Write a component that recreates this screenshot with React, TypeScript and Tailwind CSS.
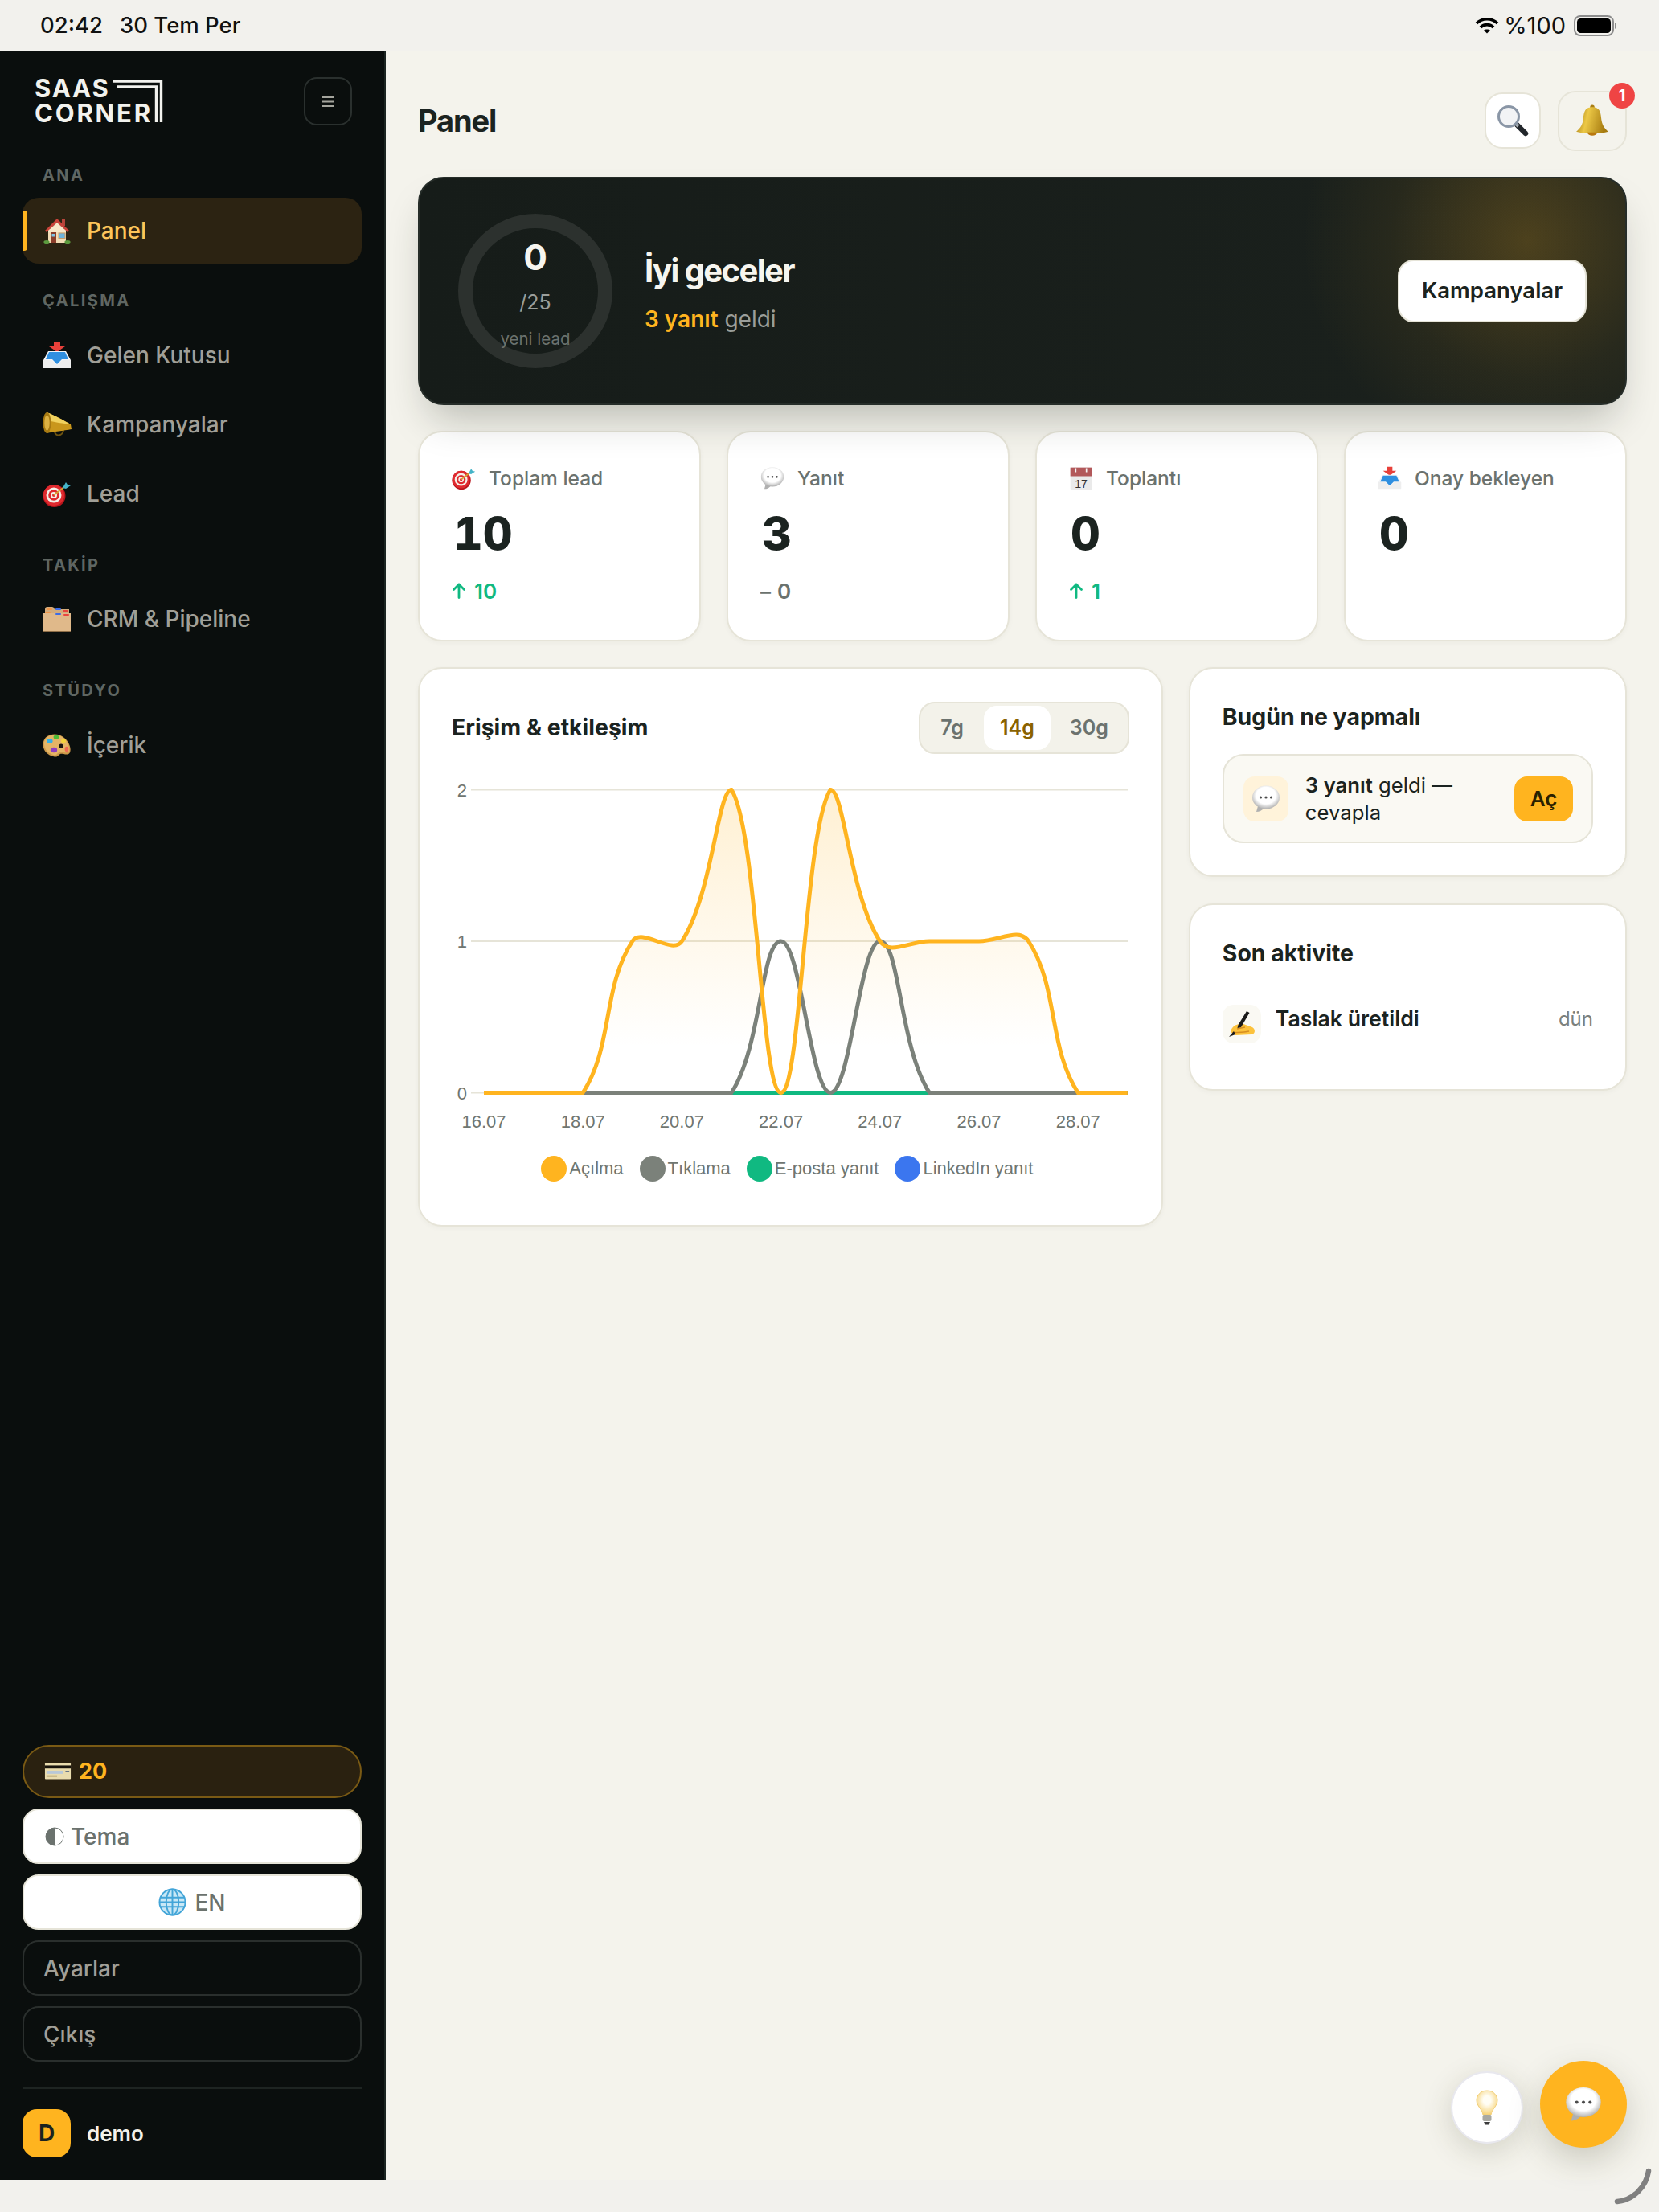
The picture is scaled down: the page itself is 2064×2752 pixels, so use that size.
import type { ReactNode } from "react";

// --- emoji drawings ---

function HouseIcon({ size = 36 }: { size?: number }) {
  return (
    <svg width={size} height={size} viewBox="0 0 36 36">
      <rect x="24" y="3" width="4" height="9" fill="#b5443a" />
      <rect x="7" y="16" width="22" height="17" fill="#f3dcb6" />
      <path d="M18 3 L33 18 L31 20 L18 8 L5 20 L3 18 Z" fill="#c8433a" />
      <path d="M18 8 L29 18 L29 20 L7 20 L7 18 Z" fill="#f8e7c9" />
      <rect x="10" y="20" width="7" height="13" fill="#8a3d2b" />
      <rect x="11.5" y="22" width="4" height="3.5" fill="#7ec3e6" />
      <rect x="20" y="21" width="8" height="6.5" fill="#6fb3dc" stroke="#c69a68" strokeWidth="1" />
      <ellipse cx="5" cy="32" rx="3.6" ry="2" fill="#5c9a3e" />
      <ellipse cx="31" cy="32" rx="3.6" ry="2" fill="#5c9a3e" />
    </svg>
  );
}

function InboxIcon({ size = 36 }: { size?: number }) {
  return (
    <svg width={size} height={size} viewBox="0 0 36 36">
      <path d="M14 1 H22 V7 H28 L18 14 L8 7 H14 Z" fill="#e8403a" />
      <path d="M7 13 H29 L35 24 V33 H1 V24 Z" fill="#f2f3f5" />
      <path d="M8 14 H28 L32 23 H24 L18 29 L12 23 H4 Z" fill="#2f8fe0" />
      <path d="M1 24 H11 L18 30 L25 24 H35 V34 H1 Z" fill="#eeeeee" />
    </svg>
  );
}

function MegaphoneIcon({ size = 36 }: { size?: number }) {
  return (
    <svg width={size} height={size} viewBox="0 0 36 36">
      <path d="M15 26 C15 34 25 33 26 25" fill="none" stroke="#6e5310" strokeWidth="2" />
      <path d="M5 3 C14 6 26 13 35 18 L36 24 C26 26 14 27 5 29 Z" fill="#c9971c" />
      <path d="M5 3 C14 6 26 13 35 18 C26 17 14 15 6 13 Z" fill="#f1d25f" />
      <ellipse cx="5.5" cy="16" rx="5" ry="13" fill="#a87a12" />
      <ellipse cx="5.5" cy="16" rx="3.2" ry="9.5" fill="#dcb142" />
    </svg>
  );
}

function TargetIcon({ size = 36 }: { size?: number }) {
  return (
    <svg width={size} height={size} viewBox="0 0 36 36">
      <circle cx="14.5" cy="21" r="14" fill="#b8151c" />
      <circle cx="14" cy="20" r="13" fill="#e02a2f" />
      <circle cx="14" cy="20" r="9.5" fill="#f5efe8" />
      <circle cx="14" cy="20" r="6.8" fill="#e02a2f" />
      <circle cx="14" cy="20" r="4" fill="#f5efe8" />
      <circle cx="14" cy="20" r="2" fill="#e02a2f" />
      <path d="M14 20 L28 9" stroke="#d5a033" strokeWidth="2" />
      <path d="M25 11 L29 4 L31 7 L35 8 L29 12 Z" fill="#45b4c8" />
    </svg>
  );
}

function BoxIcon({ size = 36 }: { size?: number }) {
  return (
    <svg width={size} height={size} viewBox="0 0 36 36">
      <path d="M3 6 Q3 3 6 3 H12 Q14 3 15 6 H33 V12 H3 Z" fill="#d4ac7c" />
      <rect x="5" y="5" width="7" height="2" rx="1" fill="#f0964a" />
      <rect x="16" y="5" width="7" height="2" rx="1" fill="#3d6ce6" />
      <rect x="25" y="7" width="7" height="2" rx="1" fill="#e8463f" />
      <path d="M1 11 H35 V34 H1 Z" fill="#e0b98a" />
      <rect x="3" y="9" width="7" height="2" rx="1" fill="#f0964a" />
      <rect x="16" y="11" width="7" height="2" rx="1" fill="#3d6ce6" />
      <rect x="26" y="12" width="7" height="2" rx="1" fill="#e8463f" />
      <path d="M1 33.5 H35" stroke="#8f6e48" strokeWidth="1" />
    </svg>
  );
}

function PaletteIcon({ size = 36 }: { size?: number }) {
  return (
    <svg width={size} height={size} viewBox="0 0 36 36">
      <path d="M1 14 C3 4 18 1 27 9 C33 14 36 22 34 27 C32 32 25 28 22 29 C19 30 20 34 13 32 C6 30 -1 24 1 14 Z" fill="#cf9a4a" />
      <path d="M2 14 C4 5 18 2 26 9 C32 14 34 22 33 25 C31 29 25 26 21 27 C17 28 18 32 13 30 C7 28 1 23 2 14 Z" fill="#e5b566" />
      <ellipse cx="9" cy="13" rx="3.6" ry="3" fill="#35b0e6" />
      <ellipse cx="17" cy="8" rx="3.4" ry="2.6" fill="#4cbc36" />
      <ellipse cx="26" cy="13" rx="3" ry="2.2" fill="#f4d43c" />
      <ellipse cx="14" cy="24" rx="4.2" ry="3.2" fill="#8f3ec0" />
      <ellipse cx="30" cy="23" rx="2.4" ry="3.2" fill="#ef6a55" />
      <circle cx="23" cy="19" r="2.6" fill="#1a1510" />
    </svg>
  );
}

function CardIcon({ size = 36 }: { size?: number }) {
  return (
    <svg width={size} height={size} viewBox="0 0 36 36">
      <rect x="1" y="7" width="34" height="21" rx="1" fill="#e9dcae" />
      <rect x="1" y="10" width="34" height="4" fill="#17130c" />
      <rect x="3" y="17" width="22" height="4" fill="#b8c8d8" />
      <rect x="28" y="17" width="5" height="2" fill="#5d6d86" />
      <rect x="3" y="23" width="14" height="2" fill="#b5a573" />
    </svg>
  );
}

function GlobeIcon({ size = 36 }: { size?: number }) {
  return (
    <svg width={size} height={size} viewBox="0 0 36 36" fill="none">
      <circle cx="18" cy="18" r="17" fill="#c9e8f6" />
      <g stroke="#43a5d8" strokeWidth="2">
        <circle cx="18" cy="18" r="16.5" />
        <ellipse cx="18" cy="18" rx="8" ry="16.5" />
        <path d="M18 1.5 V34.5 M2 12 H34 M1.5 18 H34.5 M2 24 H34" />
      </g>
    </svg>
  );
}

function SearchEmoji() {
  return (
    <svg width="40" height="40" viewBox="0 0 40 40" fill="none">
      <path d="M25 25 L36 36" stroke="#22262b" strokeWidth="6.5" strokeLinecap="round" />
      <path d="M23 23 L27 27" stroke="#a9b0b6" strokeWidth="4" />
      <circle cx="15" cy="15" r="12.5" fill="#f2f3f5" stroke="#8a96a6" strokeWidth="3" />
    </svg>
  );
}

function BellEmoji() {
  return (
    <svg width="42" height="42" viewBox="0 0 40 40">
      <defs>
        <linearGradient id="bellGold" x1="0" x2="1" y1="0" y2="0.2">
          <stop offset="0" stopColor="#9a700e" />
          <stop offset="0.4" stopColor="#ecc846" />
          <stop offset="1" stopColor="#a67b10" />
        </linearGradient>
      </defs>
      <circle cx="20" cy="4" r="2.6" fill="#a97d12" />
      <path d="M20 4 C10 4 10 12 9 20 C8 26 5 30 1 33 C10 36 30 36 39 33 C35 30 32 26 31 20 C30 12 30 4 20 4 Z" fill="url(#bellGold)" />
      <path d="M14 34 C15 39 25 39 26 34 Z" fill="#b9780f" />
    </svg>
  );
}

function BubbleIcon({ size = 36 }: { size?: number }) {
  return (
    <svg width={size} height={size} viewBox="0 0 36 36">
      <defs>
        <radialGradient id="bubbleFill" cx="0.5" cy="0.42" r="0.6">
          <stop offset="0.6" stopColor="#ffffff" />
          <stop offset="1" stopColor="#a8a8a8" />
        </radialGradient>
      </defs>
      <path d="M8 27 L6 34 Q12 34 16 29 Z" fill="#b0b0b0" />
      <ellipse cx="18" cy="16" rx="17" ry="14.5" fill="url(#bubbleFill)" />
      <circle cx="11.5" cy="16" r="1.6" fill="#4b4b4b" />
      <circle cx="18" cy="16" r="1.6" fill="#4b4b4b" />
      <circle cx="24.5" cy="16" r="1.6" fill="#4b4b4b" />
    </svg>
  );
}

function CalendarIcon({ size = 30 }: { size?: number }) {
  return (
    <svg width={size} height={size} viewBox="0 0 36 36">
      <rect x="2" y="2" width="32" height="33" rx="1.5" fill="#eaeaea" />
      <rect x="2" y="2" width="32" height="13" fill="#b2585a" />
      <rect x="9" y="3" width="2" height="6" fill="#f4f4f4" />
      <rect x="25" y="3" width="2" height="6" fill="#f4f4f4" />
      <text x="18" y="32" textAnchor="middle" fontSize="17" fill="#333" fontFamily="Liberation Sans, sans-serif">17</text>
    </svg>
  );
}

function BulbIcon() {
  return (
    <svg width="28" height="44" viewBox="0 0 28 44">
      <defs>
        <radialGradient id="bulbFill" cx="0.5" cy="0.4" r="0.6">
          <stop offset="0.3" stopColor="#fffdf4" />
          <stop offset="1" stopColor="#f6d276" />
        </radialGradient>
      </defs>
      <path d="M14 1 C5 1 1 8 1 13 C1 20 8 24 9 31 H19 C20 24 27 20 27 13 C27 8 23 1 14 1 Z" fill="url(#bulbFill)" stroke="#f2cf79" strokeWidth="1" />
      <rect x="8.5" y="31" width="11" height="8" rx="2" fill="#a8a8a2" />
      <path d="M10 40 H18 L16 43.5 H12 Z" fill="#3b3b3b" />
    </svg>
  );
}

function WriteIcon() {
  return (
    <svg width="36" height="36" viewBox="0 0 36 36">
      <path d="M4 28 C5 21 12 17 20 18 L31 22 C36 25 34 31 30 31 L10 32 Z" fill="#fcc23c" />
      <path d="M6 29 C10 28 18 29 27 27 M12 24 L22 22" fill="none" stroke="#d78e1f" strokeWidth="1.4" />
      <path d="M24 2 L27.5 4 L17 22 L12.5 23 L13.5 19 Z" fill="#1a1a1a" />
      <path d="M2 34 L8 27 L10 31 Z" fill="#1a1a1a" />
    </svg>
  );
}

function ArrowUp() {
  return (
    <svg width="18" height="20" viewBox="0 0 18 20" fill="none" stroke="#10b981" strokeWidth="2.8" strokeLinecap="round" strokeLinejoin="round">
      <path d="M9 18.5 V2 M2.5 8.5 L9 2 L15.5 8.5" />
    </svg>
  );
}

// --- chart ---

const chartLeft = 602;
const chartStep = 61.6;
const yTop = 982.5;
const yBase = 1359.5;

function linePath(values: number[]) {
  const pts = values.map((v, i) => ({
    x: chartLeft + i * chartStep,
    y: yBase - (v / 2) * (yBase - yTop),
  }));
  const clamp = (n: number) => Math.min(yBase, Math.max(yTop, n));
  // same spline as chart.js with tension 0.4
  const ctrl = pts.map((p, i) => {
    const a = pts[Math.max(i - 1, 0)];
    const b = pts[Math.min(i + 1, pts.length - 1)];
    const d1 = Math.hypot(p.x - a.x, p.y - a.y);
    const d2 = Math.hypot(b.x - p.x, b.y - p.y);
    const s1 = d1 / (d1 + d2) || 0;
    const s2 = d2 / (d1 + d2) || 0;
    return {
      px: p.x - 0.4 * s1 * (b.x - a.x),
      py: clamp(p.y - 0.4 * s1 * (b.y - a.y)),
      nx: p.x + 0.4 * s2 * (b.x - a.x),
      ny: clamp(p.y + 0.4 * s2 * (b.y - a.y)),
    };
  });
  let d = `M${pts[0].x} ${pts[0].y}`;
  for (let i = 1; i < pts.length; i++) {
    d += ` C${ctrl[i - 1].nx} ${ctrl[i - 1].ny} ${ctrl[i].px} ${ctrl[i].py} ${pts[i].x} ${pts[i].y}`;
  }
  return d;
}

const opens = [0, 0, 0, 1, 1, 2, 0, 2, 1, 1, 1, 1, 0, 0];
const clicks = [0, 0, 0, 0, 0, 0, 1, 0, 1, 0, 0, 0, 0, 0];
const flat = [0, 0, 0, 0, 0, 0, 0, 0, 0, 0, 0, 0, 0, 0];
const dates = ["16.07", "18.07", "20.07", "22.07", "24.07", "26.07", "28.07"];

function EngagementChart() {
  const tickFont = "Liberation Sans, Arial, sans-serif";
  return (
    <svg className="mt-[31px] block" width="842" height="450" viewBox="562 970 842 450" fill="none">
      <defs>
        <linearGradient id="openFill" gradientUnits="userSpaceOnUse" x1="0" x2="0" y1={yTop} y2={yBase}>
          <stop offset="0" stopColor="#ffb41f" stopOpacity="0.2" />
          <stop offset="0.85" stopColor="#ffb41f" stopOpacity="0" />
        </linearGradient>
      </defs>
      {[yTop, (yTop + yBase) / 2, yBase].map((y) => (
        <path key={y} d={`M586 ${y} H1403`} stroke="#e6e4d8" strokeWidth="2" />
      ))}
      {["2", "1", "0"].map((t, i) => (
        <text key={t} x="581" y={yTop + 8 + (i * (yBase - yTop)) / 2} textAnchor="end" fontSize="22" fill="#6f7671" fontFamily={tickFont}>
          {t}
        </text>
      ))}
      <path d={`${linePath(opens)} V${yBase} H${chartLeft} Z`} fill="url(#openFill)" />
      <path d={linePath(flat)} stroke="#3b76ef" strokeWidth="5" />
      <path d={linePath(flat)} stroke="#10b981" strokeWidth="5" />
      <path d={linePath(clicks)} stroke="#7b817a" strokeWidth="5" />
      <path d={linePath(opens)} stroke="#ffb41f" strokeWidth="5" />
      {dates.map((t, i) => (
        <text key={t} x={chartLeft + i * 2 * chartStep} y="1403" textAnchor="middle" fontSize="22" fill="#6f7671" fontFamily={tickFont}>
          {t}
        </text>
      ))}
    </svg>
  );
}

const legend = [
  { label: "Açılma", color: "bg-[#ffb41f]" },
  { label: "Tıklama", color: "bg-[#7b817a]" },
  { label: "E-posta yanıt", color: "bg-[#10b981]" },
  { label: "LinkedIn yanıt", color: "bg-[#3b76ef]" },
];

// --- sidebar ---

function SectionLabel({ children }: { children: ReactNode }) {
  return (
    <div className="h-[24px] pl-[25px] text-[20px] leading-[24px] font-bold tracking-[0.12em] text-[#5f6662]">
      {children}
    </div>
  );
}

function NavRow({ icon, label, active }: { icon: ReactNode; label: string; active?: boolean }) {
  return (
    <div
      className={
        active
          ? "relative flex h-[82px] items-center gap-[19px] rounded-[20px] bg-[#2c2312] pl-[25px] text-[28px] font-medium text-[#fdc55a]"
          : "flex h-[82px] items-center gap-[19px] rounded-[20px] pl-[25px] text-[28px] font-medium text-[#a09f97]"
      }
    >
      {active && <span className="absolute top-[16px] left-0 h-[50px] w-[6px] rounded-r-[4px] bg-[#ffb41f]" />}
      {icon}
      {label}
    </div>
  );
}

function Sidebar() {
  return (
    <aside className="flex w-[480px] shrink-0 flex-col border-r-2 border-[#1b2421] bg-[#0a0e0d] px-[28px] pb-[28px]">
      <div className="mt-[32px] flex h-[60px] items-center justify-between pr-[12px]">
        <div className="relative ml-[15px] h-[56px] w-[160px] font-bold text-[#f2f2ee]">
          <div className="absolute top-[0px] left-0 text-[31px] leading-[24px] tracking-[1.8px]">SAAS</div>
          <div className="absolute top-[31px] left-0 text-[31px] leading-[24px] tracking-[2.8px]">CORNER</div>
          <svg className="absolute top-0 left-0" width="160" height="56" viewBox="0 0 160 56" fill="none" stroke="#f2f2ee" strokeWidth="3.4">
            <path d="M97 3 H157.5 V54" />
            <path d="M102 10 H151.5 V54" />
          </svg>
        </div>
        <button className="flex h-[60px] w-[60px] items-center justify-center rounded-[16px] border-2 border-[#2a302e]">
          <svg width="20" height="16" viewBox="0 0 20 16" stroke="#a5a59d" strokeWidth="2">
            <path d="M2 3 H18 M2 8.5 H18 M2 14 H18" />
          </svg>
        </button>
      </div>

      <div className="mt-[50px] flex flex-col gap-[16px]">
        <SectionLabel>ANA</SectionLabel>
        <NavRow active icon={<HouseIcon />} label="Panel" />
      </div>

      <div className="mt-[34px] flex flex-col gap-[15px]">
        <SectionLabel>ÇALIŞMA</SectionLabel>
        <div className="flex flex-col gap-[4px]">
          <NavRow icon={<InboxIcon />} label="Gelen Kutusu" />
          <NavRow icon={<MegaphoneIcon />} label="Kampanyalar" />
          <NavRow icon={<TargetIcon />} label="Lead" />
        </div>
      </div>

      <div className="mt-[36px] flex flex-col gap-[14px]">
        <SectionLabel>TAKİP</SectionLabel>
        <NavRow icon={<BoxIcon />} label="CRM & Pipeline" />
      </div>

      <div className="mt-[36px] flex flex-col gap-[15px]">
        <SectionLabel>STÜDYO</SectionLabel>
        <NavRow icon={<PaletteIcon />} label="İçerik" />
      </div>

      <div className="mt-auto flex flex-col gap-[13px]">
        <div className="flex h-[66px] items-center gap-[9px] rounded-full border-2 border-[#7a5a14] bg-[#2a2110] pl-[25px] text-[27px] font-bold text-[#ffb41f]">
          <CardIcon size={34} />
          20
        </div>
        <div className="flex h-[69px] items-center gap-[8px] rounded-[20px] border-2 border-[#e6e4d8] bg-white pl-[26px] text-[28px] font-medium text-[#6b726e]">
          <svg width="24" height="24" viewBox="0 0 24 24">
            <circle cx="12" cy="12" r="11" fill="#fff" stroke="#6b726e" strokeWidth="1" />
            <path d="M12 1 A11 11 0 0 0 12 23 Z" fill="#6b726e" />
          </svg>
          Tema
        </div>
        <div className="flex h-[69px] items-center justify-center gap-[10px] rounded-[20px] border-2 border-[#e6e4d8] bg-white text-[28px] font-medium text-[#6b726e]">
          <GlobeIcon size={35} />
          EN
        </div>
        <div className="flex h-[69px] items-center rounded-[20px] border-2 border-[#2a2f2d] pl-[24px] text-[28px] font-medium text-[#a09f97]">
          Ayarlar
        </div>
        <div className="flex h-[69px] items-center rounded-[20px] border-2 border-[#2a2f2d] pl-[24px] text-[28px] font-medium text-[#a09f97]">
          Çıkış
        </div>
      </div>

      <div className="mt-[32px] flex items-center gap-[20px] border-t-2 border-[#1e2422] pt-[25px]">
        <div className="flex h-[60px] w-[60px] items-center justify-center rounded-[18px] bg-[#ffb41f] text-[28px] font-bold text-[#1b2320]">
          D
        </div>
        <span className="text-[26px] font-semibold text-[#f2f1ea]">demo</span>
      </div>
    </aside>
  );
}

// --- main ---

const stats = [
  { icon: <TargetIcon size={30} />, label: "Toplam lead", value: "10", delta: "10", up: true },
  { icon: <BubbleIcon size={30} />, label: "Yanıt", value: "3", delta: "0", up: false },
  { icon: <CalendarIcon />, label: "Toplantı", value: "0", delta: "1", up: true },
  { icon: <InboxIcon size={30} />, label: "Onay bekleyen", value: "0", delta: "", up: false },
];

function StatCard({ icon, label, value, delta, up }: (typeof stats)[number]) {
  return (
    <div className="h-[262px] rounded-[30px] border-2 border-[#e6e4d8] bg-white pt-[39px] pl-[40px] shadow-[0_2px_6px_rgba(40,40,20,0.04)]">
      <div className="flex h-[36px] items-center gap-[16px] text-[24.5px] font-medium text-[#6b726e]">
        {icon}
        {label}
      </div>
      <div className="mt-[15px] h-[72px] pl-[2px] text-[57px] leading-[72px] font-extrabold text-[#1b2320] tabular-nums">{value}</div>
      {delta && (
        <div
          className={
            up
              ? "mt-[17px] flex h-[36px] items-center gap-[10px] text-[26px] font-semibold text-[#10b981]"
              : "mt-[17px] flex h-[36px] items-center gap-[8px] text-[26px] font-semibold text-[#6b726e]"
          }
        >
          {up ? <ArrowUp /> : <span>–</span>}
          {delta}
        </div>
      )}
    </div>
  );
}

export default function App() {
  return (
    <div className="relative flex h-[2752px] w-[2064px] flex-col overflow-hidden bg-[#f2f1ed] font-['Inter',sans-serif]">
      {/* status bar */}
      <div className="flex h-[64px] items-center justify-between pr-[52px] pl-[50px] text-[27.5px] font-medium text-[#111]">
        <div className="flex gap-[21px]">
          <span>02:42</span>
          <span>30 Tem Per</span>
        </div>
        <div className="flex items-center gap-[10px]">
          <svg className="mr-[-4px]" width="30" height="22" viewBox="0 0 30 22" fill="none" stroke="#000" strokeWidth="3.6">
            <path d="M2 8 C9 1 21 1 28 8" />
            <path d="M7 13 C11 8.5 19 8.5 23 13" />
            <path d="M15 20.5 L11 16.5 C13 15 17 15 19 16.5 Z" fill="#000" stroke="none" />
          </svg>
          <span className="text-[29px] font-normal">%100</span>
          <svg width="54" height="26" viewBox="0 0 54 26">
            <rect x="1" y="1" width="48" height="24" rx="7" fill="none" stroke="#8d8d8d" strokeWidth="2" />
            <rect x="4" y="4" width="42" height="18" rx="4.5" fill="#000" />
            <path d="M51 9 C53 10 53 16 51 17 Z" fill="#8d8d8d" />
          </svg>
        </div>
      </div>

      <div className="flex h-[2648px]">
        <Sidebar />

        <main className="flex-1 bg-[#f4f3ec] px-[40px]">
          <div className="mt-[48px] flex h-[76px] items-center justify-between">
            <h1 className="text-[38px] font-bold tracking-[-0.03em] text-[#1b2320]">Panel</h1>
            <div className="flex items-center gap-[21px]">
              <button className="flex h-[70px] w-[70px] items-center justify-center rounded-[22px] border-2 border-[#e6e4d8] bg-white">
                <SearchEmoji />
              </button>
              <button className="relative flex h-[75px] w-[86px] items-center justify-center rounded-[22px] border-2 border-[#e6e4d8]">
                <BellEmoji />
                <span className="absolute top-[-12px] right-[-12px] flex h-[32px] w-[32px] items-center justify-center rounded-full bg-[#ef4444] text-[20px] font-bold text-white">
                  1
                </span>
              </button>
            </div>
          </div>

          {/* hero */}
          <div className="relative z-10 mt-[32px] flex h-[284px] items-center gap-[40px] rounded-[32px] border-2 border-[#262d29] bg-[radial-gradient(circle_at_1378px_78px,rgba(255,180,31,0.22),rgba(255,180,31,0.06)_170px,rgba(255,180,31,0)_280px),linear-gradient(90deg,#161c19,#1b211d)] px-[48px] shadow-[0_28px_50px_-14px_rgba(30,35,25,0.28)]">
            <div className="flex h-[192px] w-[192px] flex-col items-center rounded-full border-[18px] border-[#2c312e] text-center">
              <div className="mt-[10px] h-[52px] text-[44px] leading-[52px] font-bold text-[#f6f5ef]">0</div>
              <div className="mt-[14px] h-[32px] text-[25px] leading-[32px] text-[#9a9e9a]">/25</div>
              <div className="mt-[16px] h-[28px] text-[20.5px] leading-[28px] whitespace-nowrap text-[#6b726e]">yeni lead</div>
            </div>
            <div className="flex-1 pt-[4px]">
              <div className="text-[40px] leading-[48px] font-bold tracking-[-0.04em] text-[#f6f5ef]">İyi geceler</div>
              <div className="mt-[18px] text-[28px] leading-[36px] text-[#9a9e9a]">
                <span className="font-semibold text-[#ffb41f]">3 yanıt</span> geldi
              </div>
            </div>
            <button className="h-[78px] w-[235px] rounded-[20px] border-2 border-[#e6e4d8] bg-white text-[27.5px] font-semibold text-[#1b2320]">
              Kampanyalar
            </button>
          </div>

          {/* stats */}
          <div className="mt-[32px] grid grid-cols-4 gap-[32px]">
            {stats.map((s) => (
              <StatCard key={s.label} {...s} />
            ))}
          </div>

          <div className="mt-[32px] grid grid-cols-[1.7fr_1fr] gap-[32px]">
            {/* chart card */}
            <div className="h-[696px] rounded-[30px] border-2 border-[#e6e4d8] bg-white px-[40px] pt-[40px] shadow-[0_2px_6px_rgba(40,40,20,0.04)]">
              <div className="flex h-[67px] items-center justify-between">
                <h2 className="text-[28.4px] font-bold text-[#1b2320]">Erişim & etkileşim</h2>
                <div className="flex items-center gap-[4px] rounded-[20px] border-2 border-[#e6e4d8] bg-[#f3f2ea] px-[4px] py-[3px] text-[25px] font-semibold text-[#6b726e]">
                  <span className="px-[21px] py-[9px]">7g</span>
                  <span className="rounded-[16px] bg-white px-[20px] py-[9px] text-[#8a6200]">14g</span>
                  <span className="px-[20px] py-[9px]">30g</span>
                </div>
              </div>
              <EngagementChart />
              <div className="mt-[17px] flex items-center justify-center gap-[20px] pr-[8px] font-['Liberation_Sans',Arial,sans-serif] text-[22px] text-[#6f7671]">
                {legend.map((l) => (
                  <div key={l.label} className="flex items-center gap-[3px]">
                    <span className={`h-[32px] w-[32px] rounded-full ${l.color}`} />
                    {l.label}
                  </div>
                ))}
              </div>
            </div>

            {/* right column */}
            <div className="flex flex-col gap-[33px]">
              <div className="h-[261px] rounded-[30px] border-2 border-[#e6e4d8] bg-white px-[40px] pt-[42px] shadow-[0_2px_6px_rgba(40,40,20,0.04)]">
                <h2 className="h-[36px] text-[28.4px] leading-[36px] font-bold text-[#1b2320]">Bugün ne yapmalı</h2>
                <div className="mt-[28px] flex h-[111px] items-center gap-[21px] rounded-[26px] border-2 border-[#e6e4d8] bg-[#faf9f3] pr-[23px] pl-[24px]">
                  <div className="flex h-[56px] w-[56px] shrink-0 items-center justify-center rounded-[14px] bg-[#fff3da]">
                    <BubbleIcon />
                  </div>
                  <div className="flex-1 text-[25.7px] leading-[34px] text-[#1b2320]">
                    <div>
                      <span className="font-semibold">3 yanıt</span> geldi —
                    </div>
                    <div>cevapla</div>
                  </div>
                  <button className="h-[56px] w-[73px] shrink-0 rounded-[16px] bg-[#ffb41f] text-[26px] font-semibold text-[#2a2000]">
                    Aç
                  </button>
                </div>
              </div>

              <div className="h-[233px] rounded-[30px] border-2 border-[#e6e4d8] bg-white px-[40px] pt-[42px] shadow-[0_2px_6px_rgba(40,40,20,0.04)]">
                <h2 className="h-[36px] text-[28.4px] leading-[36px] font-bold text-[#1b2320]">Son aktivite</h2>
                <div className="mt-[46px] flex items-start gap-[18px]">
                  <div className="flex h-[48px] w-[48px] shrink-0 items-center justify-center rounded-[14px] bg-[#faf9f3]">
                    <WriteIcon />
                  </div>
                  <div className="flex-1 text-[26.7px] leading-[34px] font-semibold text-[#1b2320]">Taslak üretildi</div>
                  <div className="text-[24px] leading-[36px] text-[#7b817d]">dün</div>
                </div>
              </div>
            </div>
          </div>
        </main>
      </div>

      {/* floating buttons */}
      <button className="absolute top-[2577px] left-[1805px] flex h-[90px] w-[90px] items-center justify-center rounded-full border-2 border-[#e8e8ee] bg-white shadow-[0_10px_36px_rgba(60,60,30,0.18)]">
        <BulbIcon />
      </button>
      <button className="absolute top-[2564px] left-[1916px] flex h-[108px] w-[108px] items-center justify-center rounded-full bg-[#ffb41f] shadow-[0_16px_40px_rgba(60,60,30,0.22)]">
        <BubbleIcon size={46} />
      </button>
      <svg className="absolute top-[2695px] left-[2006px]" width="50" height="50" viewBox="0 0 50 50" fill="none">
        <path d="M6 44 C26 42 42 26 45 6" stroke="#808080" strokeWidth="6.5" strokeLinecap="round" />
      </svg>
    </div>
  );
}
